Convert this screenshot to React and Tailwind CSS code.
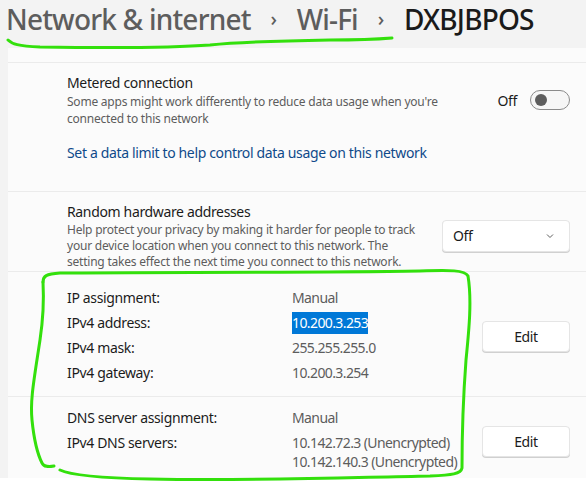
import React from "react";

const Chevron = () => (
  <svg width="10" height="10" viewBox="0 0 10 10" className="text-[#5f5f5f]">
    <path d="M2 3.5 L5 6.5 L8 3.5" fill="none" stroke="currentColor" strokeWidth="1" />
  </svg>
);

const Sep = () => (
  <span className="inline-block w-[8px] mx-[19px] text-[#5d5d5d] text-[20px] leading-[36px] tracking-normal text-center">›</span>
);

export default function App() {
  return (
    <div className="relative w-[586px] h-[488px] overflow-hidden bg-white font-['Noto_Sans',sans-serif] text-[#1b1b1b]">
      <div className="h-[478px] bg-[#f3f3f3] flex flex-col">
        {/* Header */}
        <div className="h-[48px] flex items-start pl-[6px] pt-[1px] text-[28px] leading-[36px] font-medium tracking-[-0.8px]">
          <span className="text-[#5d5d5d]">Network &amp; internet</span>
          <Sep />
          <span className="text-[#5d5d5d]">Wi-Fi</span>
          <Sep />
          <span className="text-[#1a1a1a]">DXBJBPOS</span>
        </div>
        {/* Panel */}
        <div className="ml-[8px] flex-1 bg-[#fbfbfb] flex flex-col tracking-[-0.35px]">
          <div className="h-[15px] border-b border-[#ebebeb]" />
          {/* Metered */}
          <div className="h-[129px] border-b border-[#ebebeb] pl-[59px] pr-[16px] pt-[10px]">
            <div className="flex items-center">
              <div className="flex-1">
                <div className="text-[14px] leading-[20px]">Metered connection</div>
                <div className="text-[12px] leading-[17px] text-[#5d5d5d] tracking-[-0.22px]">
                  Some apps might work differently to reduce data usage when you're
                  <br />
                  connected to this network
                </div>
              </div>
              <div className="flex items-center">
                <span className="text-[14px] mr-[13px]">Off</span>
                <div className="w-[40px] h-[20px] rounded-full border border-[#8a8a8a] bg-[#f6f6f6] flex items-center pl-[4px]">
                  <div className="w-[12px] h-[12px] rounded-full bg-[#5d5d5d]" />
                </div>
              </div>
            </div>
            <div className="mt-[16px] text-[14px] leading-[20px] text-[#0f4a8a]">
              Set a data limit to help control data usage on this network
            </div>
          </div>
          {/* Random hardware */}
          <div className="h-[80px] border-b border-[#ebebeb] pl-[59px] pr-[16px] pt-[9px] flex items-center">
            <div className="flex-1">
              <div className="text-[14px] leading-[20px]">Random hardware addresses</div>
              <div className="text-[12px] leading-[16px] text-[#5d5d5d] tracking-[-0.22px]">
                Help protect your privacy by making it harder for people to track
                <br />
                your device location when you connect to this network. The
                <br />
                setting takes effect the next time you connect to this network.
              </div>
            </div>
            <div className="w-[128px] h-[32px] mt-[-1px] rounded-[4px] bg-white border border-[#e5e5e5] shadow-[0_1px_0_#d0d0d0] flex items-center justify-between pl-[10px] pr-[14px]">
              <span className="text-[14px]">Off</span>
              <Chevron />
            </div>
          </div>
          {/* IP */}
          <div className="h-[125px] border-b border-[#ebebeb] pl-[59px] pr-[16px] flex items-center">
            <div className="flex-1 text-[14px] pt-[2px]">
              {[
                ["IP assignment:", "Manual"],
                ["IPv4 address:", "10.200.3.253"],
                ["IPv4 mask:", "255.255.255.0"],
                ["IPv4 gateway:", "10.200.3.254"],
              ].map(([l, v], i) => (
                <div key={l} className="flex h-[25px] items-center">
                  <span className="w-[225px]">{l}</span>
                  {i === 1 ? (
                    <span className="bg-[#0078d7] text-white leading-[22px] inline-block tracking-[-0.6px]">{v}</span>
                  ) : (
                    <span className="text-[#5d5d5d] tracking-[-0.6px]">{v}</span>
                  )}
                </div>
              ))}
            </div>
            <div className="w-[88px] h-[31px] rounded-[4px] bg-white border border-[#e5e5e5] shadow-[0_1px_0_#d0d0d0] flex items-center justify-center text-[14px] mt-[5px]">
              Edit
            </div>
          </div>
          {/* DNS */}
          <div className="flex-1 pl-[59px] pr-[16px] pt-[8px] flex items-start">
            <div className="flex-1 text-[14px]">
              <div className="flex h-[25px] items-center">
                <span className="w-[225px]">DNS server assignment:</span>
                <span className="text-[#5d5d5d] tracking-[-0.6px]">Manual</span>
              </div>
              <div className="flex">
                <span className="w-[225px] leading-[19px] mt-[3px]">IPv4 DNS servers:</span>
                <div className="text-[#5d5d5d] leading-[19px] mt-[3px] tracking-[-0.6px]">
                  <div>10.142.72.3 (Unencrypted)</div>
                  <div>10.142.140.3 (Unencrypted)</div>
                </div>
              </div>
            </div>
            <div className="w-[88px] h-[31px] mt-[21px] rounded-[4px] bg-white border border-[#e5e5e5] shadow-[0_1px_0_#d0d0d0] flex items-center justify-center text-[14px]">
              Edit
            </div>
          </div>
        </div>
      </div>
      {/* Green annotations */}
      <svg className="absolute inset-0 pointer-events-none" width="586" height="488" viewBox="0 0 586 488">
        <g fill="none" stroke="#33e00c" strokeWidth="3" strokeLinecap="round" strokeLinejoin="round">
          <path d="M8 40 C12 44 18 46 40 47 C110 48 170 48 210 45 C240 42 270 41 330 40 C360 40 380 39 392 38" />
          <path d="M43 282 C43 276 46 274 60 273 C150 272 300 273 420 271 C450 270 465 270 468 276 C472 300 469 330 466 360 C463 400 462 440 462 468 C461 474 452 475 430 476 C330 478 250 481 150 479 C100 478 70 475 60 470" />
          <path d="M43 282 C44 300 43 320 40 340 C34 380 30 400 32 420 C34 440 38 455 42 463 C44 467 48 467 54 466" />
        </g>
      </svg>
    </div>
  );
}
